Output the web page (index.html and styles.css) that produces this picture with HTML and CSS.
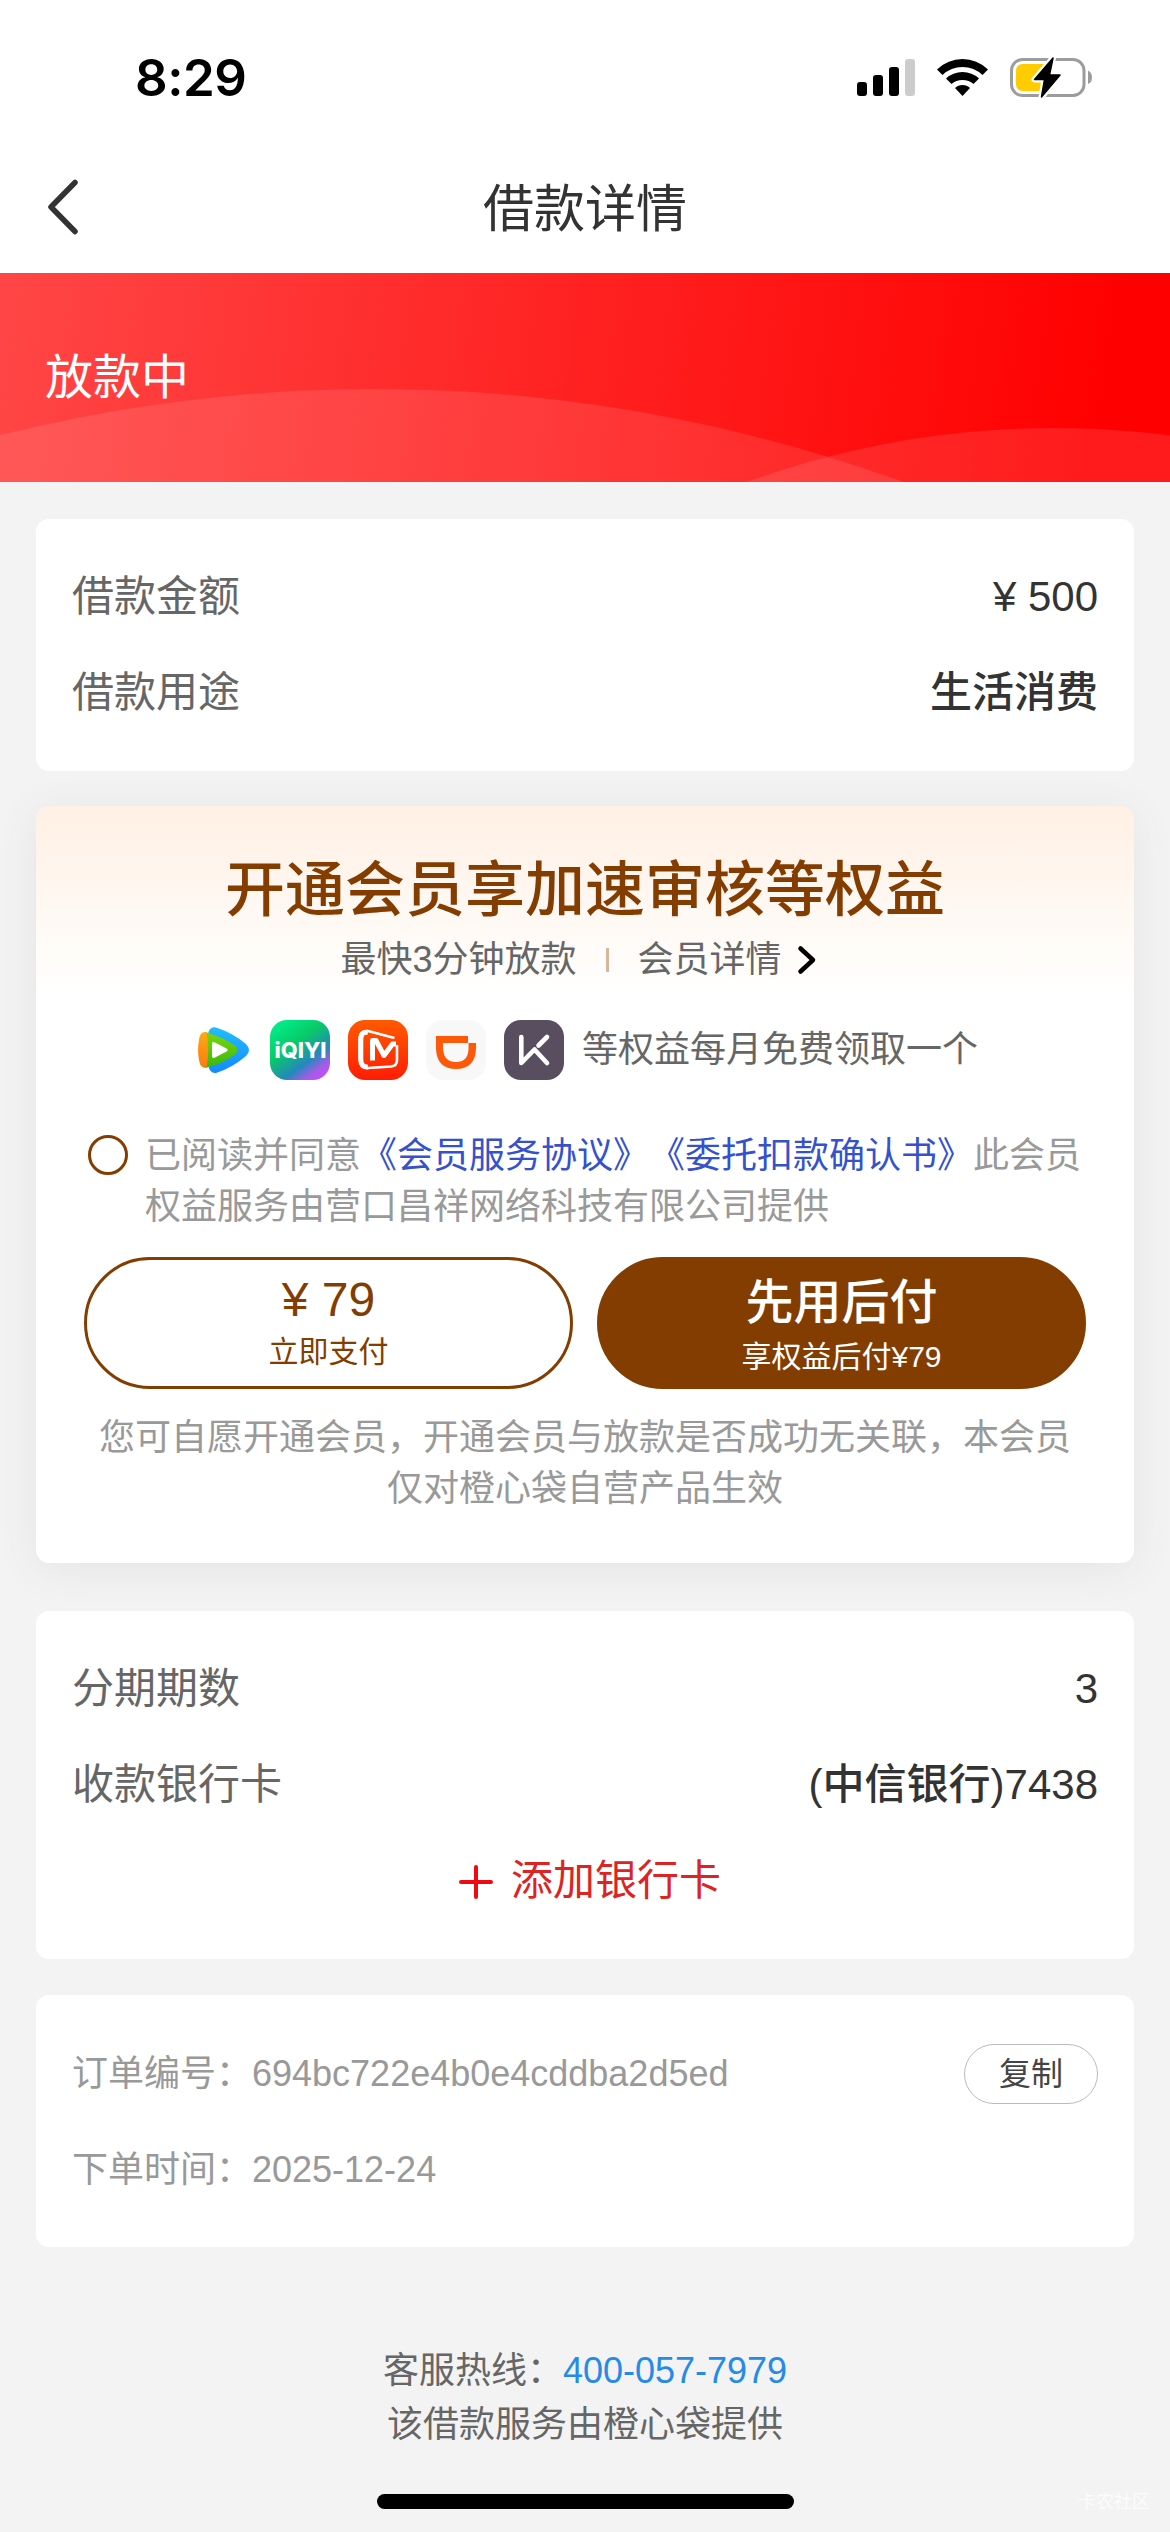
FILE: index.html
```html
<!DOCTYPE html>
<html lang="zh-CN">
<head>
<meta charset="utf-8">
<title>借款详情</title>
<link rel="stylesheet" href="styles.css">
</head>
<body>
<header class="statusbar">
  <span class="clock">8:29</span>
  <svg class="status-icons" width="240" height="50" viewBox="852 53 240 50">
    <rect x="856" y="82" width="10" height="14" rx="3"/>
    <rect x="872" y="75" width="10" height="21" rx="3"/>
    <rect x="888" y="67" width="10" height="29" rx="3"/>
    <rect x="904" y="59" width="10" height="37" rx="3" fill="#ccc"/>
    <path d="M936 69.500Q947 59 961.500 59T987 69.500L981.500 75Q973 67 961.500 67T941.500 75Z"/>
    <path d="M945 78.500Q952 72 961.500 72T978 78.500L972.500 84Q968 80 961.500 80T950.500 84Z"/>
    <path d="M954 88Q957 85 961.500 85T969 88L961.500 96Z"/>
    <rect x="1010.500" y="59.500" width="72.500" height="36" rx="11" fill="none" stroke="#9c9c9c" stroke-width="3"/>
    <path d="M1087 70.500Q1091 72.500 1091 77.500T1087 84Z" fill="#9c9c9c"/>
    <path d="M1022 64H1044V91H1022Q1015 91 1015 84V71Q1015 64 1022 64Z" fill="#ffcc00"/>
    <path d="M1052 58L1033.500 79.500H1043.500L1040.500 97L1059 75H1048.500Z" fill="#000" stroke="#fff" stroke-width="6" stroke-linejoin="round" paint-order="stroke"/>
    <path d="M1052 58L1033.500 79.500H1043.500L1040.500 97L1059 75H1048.500Z" stroke="#000" stroke-width="1.500" stroke-linejoin="round"/>
  </svg>
</header>
<nav class="navbar">
  <svg class="back" width="36" height="60" viewBox="0 0 36 60"><path d="M30 5.500L6 30L30 54.500" fill="none" stroke="#333" stroke-width="5.500" stroke-linecap="round" stroke-linejoin="round"/></svg>
  <h1>借款详情</h1>
</nav>
<section class="banner">
  <svg class="waves" width="1170" height="209" viewBox="0 273 1170 209">
    <circle cx="375" cy="1937" r="1548"/>
    <circle cx="1054" cy="1328" r="900"/>
  </svg>
  <span>放款中</span>
</section>
<main>
  <section class="card">
    <div class="row"><span>借款金额</span><strong>¥ 500</strong></div>
    <div class="row"><span>借款用途</span><strong>生活消费</strong></div>
  </section>

  <section class="card member">
    <h2>开通会员享加速审核等权益</h2>
    <p class="sub"><span>最快3分钟放款</span><i class="sep"></i><span>会员详情</span>
      <svg class="more" width="20" height="30" viewBox="0 0 20 30"><path d="M3.500 3.500L16 15L3.500 26.500" fill="none" stroke="#000" stroke-width="4.500" stroke-linecap="round" stroke-linejoin="round"/></svg>
    </p>
    <div class="perks">
      <svg width="60" height="60" viewBox="0 0 60 60">
        <defs>
          <linearGradient id="tb" x1="0" y1="0" x2="0" y2="1"><stop offset="0" stop-color="#22bdfb"/><stop offset="1" stop-color="#1688ff"/></linearGradient>
          <linearGradient id="tg" x1="0" y1="0" x2="0" y2="1"><stop offset="0" stop-color="#7bd60c"/><stop offset="1" stop-color="#38b80c"/></linearGradient>
          <linearGradient id="to" x1="0" y1="0" x2="0" y2="1"><stop offset="0" stop-color="#ffaa12"/><stop offset="1" stop-color="#fb7a12"/></linearGradient>
        </defs>
        <path d="M16 15Q17 6 24 7.500Q41 13 54 24Q60 30 54 36Q40 48 24 53Q18 54 16 45Z" fill="url(#tb)"/>
        <path d="M7 20Q8 11 14 12Q21 14 23 30Q21 46 14 48Q8 48 7 40Q5 30 7 20Z" fill="url(#to)"/>
        <path d="M14.500 12.500Q30 17 43 25.500Q48 30 43 34.500Q30 44 14.500 47.500Q18 30 14.500 12.500Z" fill="url(#tg)"/>
        <path d="M20 24Q20 21 23 22.500L34.500 28.500Q37 30 34.500 31.500L23 37.500Q20 39 20 36Z" fill="#fff"/>
      </svg>
      <svg width="60" height="60" viewBox="0 0 60 60">
        <defs><linearGradient id="iq" x1=".15" y1="0" x2=".88" y2="1"><stop offset="0" stop-color="#00f08a"/><stop offset=".38" stop-color="#08c968"/><stop offset=".68" stop-color="#2488bd"/><stop offset=".85" stop-color="#a65be6"/><stop offset="1" stop-color="#c84cfa"/></linearGradient></defs>
        <rect width="60" height="60" rx="17" fill="url(#iq)"/>
        <text x="4.500" y="38" class="iq-text" textLength="52" lengthAdjust="spacingAndGlyphs">iQIYI</text>
      </svg>
      <svg width="60" height="60" viewBox="0 0 60 60">
        <defs><linearGradient id="mg" x1="0" y1="0" x2="0" y2="1"><stop offset="0" stop-color="#ff5a00"/><stop offset="1" stop-color="#ff1d05"/></linearGradient></defs>
        <rect width="60" height="60" rx="17" fill="url(#mg)"/>
        <g fill="none" stroke="#fff" stroke-linejoin="round">
          <path d="M46.500 18L21 11.300Q12 10 11.700 19V39Q12 48.500 20 48L43 46.500Q49 46 49 40V25" stroke-width="2.600"/>
          <path d="M20 12.300Q12.800 11 12.800 20V39Q12.800 47.500 20 47" stroke-width="5"/>
          <path d="M24.500 40.500V20.500H28L36 35.500L44.500 24H48" stroke-width="5"/>
        </g>
      </svg>
      <svg width="60" height="60" viewBox="0 0 60 60">
        <rect width="60" height="60" rx="17" fill="#f8f8f8"/>
        <path fill="#fc5a0a" fill-rule="evenodd" d="M10 16H42V23H50V29Q49 49 30 49Q11 49 10 29ZM17 23V29Q18 42 30 42Q42 42 42.500 29V23Z"/>
      </svg>
      <svg width="60" height="60" viewBox="0 0 60 60">
        <rect width="60" height="60" rx="17" fill="#584e5f"/>
        <g fill="none" stroke="#fff" stroke-width="4.600" stroke-linecap="round" stroke-linejoin="round"><path d="M17.300 17V43L30.500 29.500L43 43"/><path d="M34.500 25.500L43 17"/></g>
      </svg>
      <span>等权益每月免费领取一个</span>
    </div>
    <div class="agree">
      <span class="radio"></span>
      <p>已阅读并同意<a>《会员服务协议》</a><a>《委托扣款确认书》</a>此会员<br>权益服务由营口昌祥网络科技有限公司提供</p>
    </div>
    <div class="buttons">
      <button class="pay outline"><b>¥ 79</b><small>立即支付</small></button>
      <button class="pay solid"><b>先用后付</b><small>享权益后付¥79</small></button>
    </div>
    <p class="note">您可自愿开通会员，开通会员与放款是否成功无关联，本会员仅对橙心袋自营产品生效</p>
  </section>

  <section class="card bank">
    <div class="row"><span>分期期数</span><strong>3</strong></div>
    <div class="row"><span>收款银行卡</span><strong>(中信银行)7438</strong></div>
    <div class="row add">
      <svg width="34" height="34" viewBox="0 0 34 34"><path d="M17 2V32M2 17H32" stroke="#ee0a12" stroke-width="4" stroke-linecap="round"/></svg>
      <span>添加银行卡</span>
    </div>
  </section>

  <section class="card order">
    <div class="row"><span>订单编号：694bc722e4b0e4cddba2d5ed</span><button class="copy">复制</button></div>
    <div class="row"><span>下单时间：2025-12-24</span></div>
  </section>
</main>
<footer>
  <p>客服热线：<a>400-057-7979</a></p>
  <p>该借款服务由橙心袋提供</p>
  <div class="home"></div>
  <span class="mark">卡农社区</span>
</footer>
</body>
</html>
```
FILE: styles.css
```css
* { box-sizing: border-box; margin: 0; padding: 0; }
body {
  width: 1170px;
  height: 2532px;
  overflow: hidden;
  display: flex;
  flex-direction: column;
  background: #f3f3f3;
  font-family: "Liberation Sans", "Noto Sans CJK SC", sans-serif;
  line-height: 1.2;
  color: #333;
  text-spacing-trim: space-all;
}
svg { display: block; flex: none; }
.statusbar {
  height: 141px;
  padding: 53px 77px 0 135px;
  display: flex;
  justify-content: space-between;
  align-items: flex-start;
  background: #fff;
}
.clock { font: 600 51px/50px Inter, sans-serif; color: #000; letter-spacing: -0.5px; }
.navbar {
  height: 132px;
  padding: 0 45px;
  display: grid;
  grid-template-columns: 36px 1fr 36px;
  align-items: center;
  background: #fff;
}
.navbar h1 { padding-top: 6px; font-size: 51px; font-weight: 400; line-height: 66px; text-align: center; }
.banner {
  position: relative;
  height: 209px;
  padding-left: 45px;
  display: flex;
  align-items: center;
  background: linear-gradient(98deg, #ff4646 0%, #f00 94%);
  color: #fff;
  font-size: 48px;
}
.banner span { position: relative; }
.waves { position: absolute; inset: 0; fill: rgba(255, 255, 255, .105); }
main { padding: 37px 36px 0; display: flex; flex-direction: column; }
.card { padding: 30px 36px; border-radius: 13px; background: #fff; }
.row {
  height: 96px;
  padding-top: 1px;
  display: flex;
  justify-content: space-between;
  align-items: center;
  font-size: 42px;
  color: #666;
}
.row strong { font-weight: 500; color: #333; }
.member {
  margin-top: 35px;
  height: 757px;
  padding: 47px 48px 0;
  background: linear-gradient(#fff0e4, #fff 190px);
  box-shadow: 0 6px 42px rgba(90, 90, 110, .09);
  display: flex;
  flex-direction: column;
}
.member h2 { font-size: 60px; font-weight: 500; line-height: 76px; text-align: center; color: #843d00; }
.sub {
  height: 50px;
  margin-top: 6px;
  padding-right: 13px;
  display: flex;
  align-items: center;
  justify-content: center;
  font-size: 36px;
  color: #666;
}
.sep { width: 3px; height: 24px; margin: 0 29px; background: #d8b79c; }
.more { margin-left: 15px; }
.perks {
  height: 60px;
  margin: 35px 0 0 108px;
  display: flex;
  align-items: center;
  gap: 18px;
  font-size: 36px;
  color: #666;
}
.iq-text { font: 800 22px Inter, sans-serif; fill: #fff; }
.agree { margin-top: 48px; padding-left: 4px; display: flex; gap: 17px; }
.radio { flex: none; width: 40px; height: 40px; margin-top: 7px; border: 3px solid #843d00; border-radius: 50%; }
.agree p { width: 940px; padding-top: 2px; font-size: 36px; line-height: 51px; color: #999; }
.agree a { color: #3551cc; }
.buttons { margin-top: 25px; display: grid; grid-template-columns: 1fr 1fr; gap: 24px; }
.pay {
  height: 132px;
  display: flex;
  flex-direction: column;
  align-items: center;
  border: 3px solid #843d00;
  border-radius: 66px;
  background: #fff;
  color: #843d00;
  font-family: inherit;
}
.pay b { font-size: 48px; font-weight: 500; line-height: 56px; }
.pay small { font-size: 30px; line-height: 40px; }
.outline { padding-top: 12px; }
.outline small { margin-top: 4px; }
.solid { padding-top: 15px; background: #843d00; color: #fff; }
.solid small { margin-top: 6px; }
.note { margin-top: 23px; padding: 0 14px; font-size: 36px; line-height: 51px; text-align: center; color: #999; }
.bank { margin-top: 48px; }
.add { justify-content: center; gap: 18px; padding-left: 10px; color: #dc2424; }
.order { margin-top: 36px; }
.order .row { font-size: 36px; color: #999; }
.copy {
  width: 134px;
  height: 60px;
  border: 1px solid #bbb;
  border-radius: 30px;
  background: #fff;
  font: 32px/56px "Liberation Sans", "Noto Sans CJK SC", sans-serif;
  color: #444;
}
footer { position: relative; flex: 1; padding-top: 97px; text-align: center; font-size: 36px; line-height: 54px; color: #666; }
footer a { color: #268be6; }
.home { width: 417px; height: 15px; margin: 42px auto 0; border-radius: 8px; background: #000; }
.mark { position: absolute; right: 20px; bottom: 18px; font-size: 18px; line-height: 24px; color: #fcfcfc; }
```
